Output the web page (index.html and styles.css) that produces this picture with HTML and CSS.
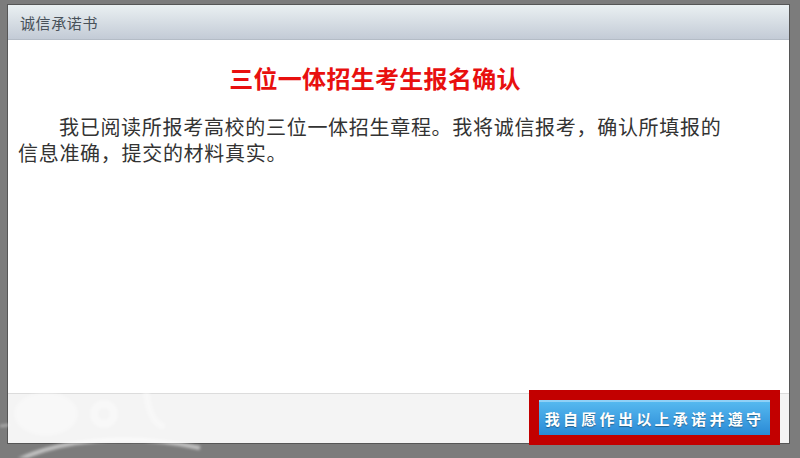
FILE: index.html
```html
<!DOCTYPE html>
<html lang="zh-CN">
<head>
    <meta charset="UTF-8">
    <title>诚信承诺书</title>
    <link rel="stylesheet" href="styles.css">
</head>
<body>
    <div class="dialog">
        <div class="dialog-header">诚信承诺书</div>

        <div class="dialog-body">
            <h1 class="pledge-title">三位一体招生考生报名确认</h1>
            <p class="pledge-text">我已阅读所报考高校的三位一体招生章程。我将诚信报考，确认所填报的信息准确，提交的材料真实。</p>
        </div>

        <div class="dialog-footer">
            <button class="agree-button">我自愿作出以上承诺并遵守</button>
        </div>
    </div>

    <!-- faint watermark swirl in the corner of the screenshot -->
    <svg class="watermark" width="240" height="90" viewBox="0 0 240 90">
        <ellipse cx="46" cy="46" rx="32" ry="22" fill="#fff" opacity="0.35"/>
        <circle cx="104" cy="46" r="10" fill="none" stroke="#fff" stroke-width="8" opacity="0.4"/>
        <path d="M146 22 C148 40 152 54 162 58" fill="none" stroke="#fff" stroke-width="7" stroke-linecap="round" opacity="0.35"/>
        <path d="M18 92 C60 72 130 64 200 80" fill="none" stroke="#fff" stroke-width="4" opacity="0.55"/>
        <path d="M0 58 L10 57" stroke="#fff" stroke-width="2" opacity="0.5"/>
    </svg>
</body>
</html>
```

FILE: styles.css
```css
* {
    margin: 0;
    padding: 0;
    box-sizing: border-box;
}

body {
    width: 800px;
    height: 458px;
    overflow: hidden;
    background-color: #7c7c7c;
    padding: 4px 10px 0 7px;
    font-family: "Noto Sans CJK SC", "Liberation Sans", sans-serif;
    position: relative;
}

.dialog {
    height: 440px;
    border: 1px solid #565656;
    background-color: #fff;
    display: flex;
    flex-direction: column;
}

.dialog-header {
    height: 35px;
    padding-left: 12px;
    display: flex;
    align-items: center;
    background: linear-gradient(to bottom, #eaf0f2, #c3cbd6);
    border-bottom: 1px solid #b4bcc6;
    color: #48515a;
    font-size: 15px;
    letter-spacing: 0.6px;
}

.dialog-body {
    flex: 1;
    padding: 23px 0 0 10px;
    width: 724px;
}

.pledge-title {
    font-size: 24px;
    line-height: 30px;
    font-weight: bold;
    color: #e8100f;
    text-align: center;
    letter-spacing: 0.3px;
}

.pledge-text {
    margin-top: 21px;
    font-size: 20px;
    line-height: 26px;
    letter-spacing: 0.7px;
    text-indent: 41px;
    color: #333;
}

.dialog-footer {
    height: 50px;
    border-top: 1px solid #dcdcdc;
    background-color: #f4f4f4;
    display: flex;
    justify-content: flex-end;
    padding: 6px 19px 0 0;
}

.agree-button {
    width: 231px;
    height: 35px;
    border: none;
    border-top: 2px solid #8fd0f6;
    background: linear-gradient(to bottom, #55b8ef, #2a8ad6);
    color: #fff;
    font-family: inherit;
    font-size: 15px;
    font-weight: bold;
    letter-spacing: 3.3px;
    text-shadow: 0 1px 1px rgba(0, 0, 0, 0.35);
    outline: 10px solid #c20000;
    cursor: pointer;
}

.watermark {
    position: absolute;
    left: 0;
    bottom: 0;
    pointer-events: none;
    filter: blur(1.5px);
}
```
